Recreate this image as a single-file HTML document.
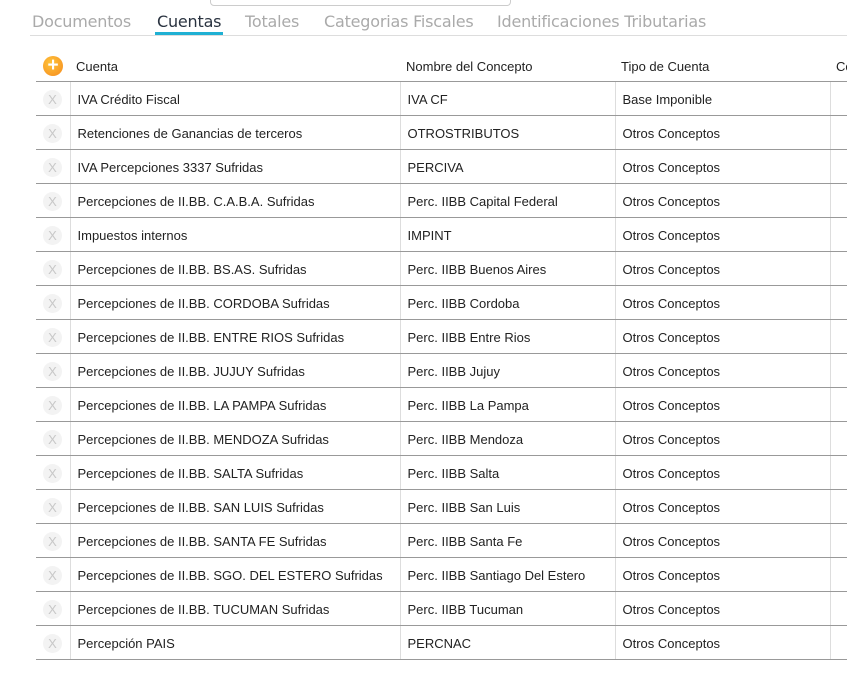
<!DOCTYPE html>
<html><head><meta charset="utf-8"><style>
body{margin:0;width:847px;height:677px;background:#fff;overflow:hidden;font-family:"Liberation Sans",sans-serif;position:relative}
.box{position:absolute;left:210px;top:-6px;width:299px;height:10px;border:1px solid #ccc;border-radius:4px}
.tabs{position:absolute;left:30px;top:0;width:817px;height:35px;border-bottom:1px solid #ddd;font-family:"DejaVu Sans","Liberation Sans",sans-serif;font-size:16px;color:#aaa}
.tabs span{position:absolute;top:12px;white-space:nowrap;letter-spacing:-0.2px}
.tabs .act{color:#2a3340}
.ul{position:absolute;left:155px;top:32px;width:68px;height:3px;background:#1fb0d3}
table{position:absolute;left:36px;top:48px;border-collapse:collapse;font-size:13px;color:#222;table-layout:fixed;width:830px}
th{font-weight:normal;text-align:left;height:30px;padding:3px 6px 0;border-bottom:1px solid #999;white-space:nowrap;overflow:hidden}
td{height:31px;border-bottom:1px solid #999;border-left:1px solid #ddd;padding:2px 7px 0 7px;white-space:nowrap;overflow:hidden}
td:first-child{border-left:none;padding:2px 0 0 0}
.x{width:19px;height:19px;border-radius:50%;background:#f3f3f3;color:#c8c8c8;font-size:13px;line-height:19px;text-align:center;margin-left:7px}
.plus{width:20px;height:20px;border-radius:50%;background:radial-gradient(circle at 40% 35%,#ffc43a,#f58a1e);color:#fff;font-size:19px;line-height:19px;text-align:center;font-weight:bold;margin-left:1px}
</style></head><body>
<div class="box"></div>
<div class="tabs">
<span style="left:2px">Documentos</span><span class="act" style="left:127px">Cuentas</span><span style="left:215px">Totales</span><span style="left:294px">Categorias Fiscales</span><span style="left:467px">Identificaciones Tributarias</span>
</div>
<div class="ul"></div>
<table>
<colgroup><col style="width:34px"><col style="width:330px"><col style="width:215px"><col style="width:215px"><col style="width:36px"></colgroup>
<tr><th style="padding:2px 0 0 6px"><div class="plus">+</div></th><th>Cuenta</th><th>Nombre del Concepto</th><th>Tipo de Cuenta</th><th>Co</th></tr>
<tr><td><div class="x">X</div></td><td>IVA Crédito Fiscal</td><td>IVA CF</td><td>Base Imponible</td><td></td></tr>
<tr><td><div class="x">X</div></td><td>Retenciones de Ganancias de terceros</td><td>OTROSTRIBUTOS</td><td>Otros Conceptos</td><td></td></tr>
<tr><td><div class="x">X</div></td><td>IVA Percepciones 3337 Sufridas</td><td>PERCIVA</td><td>Otros Conceptos</td><td></td></tr>
<tr><td><div class="x">X</div></td><td>Percepciones de II.BB. C.A.B.A. Sufridas</td><td>Perc. IIBB Capital Federal</td><td>Otros Conceptos</td><td></td></tr>
<tr><td><div class="x">X</div></td><td>Impuestos internos</td><td>IMPINT</td><td>Otros Conceptos</td><td></td></tr>
<tr><td><div class="x">X</div></td><td>Percepciones de II.BB. BS.AS. Sufridas</td><td>Perc. IIBB Buenos Aires</td><td>Otros Conceptos</td><td></td></tr>
<tr><td><div class="x">X</div></td><td>Percepciones de II.BB. CORDOBA Sufridas</td><td>Perc. IIBB Cordoba</td><td>Otros Conceptos</td><td></td></tr>
<tr><td><div class="x">X</div></td><td>Percepciones de II.BB. ENTRE RIOS Sufridas</td><td>Perc. IIBB Entre Rios</td><td>Otros Conceptos</td><td></td></tr>
<tr><td><div class="x">X</div></td><td>Percepciones de II.BB. JUJUY Sufridas</td><td>Perc. IIBB Jujuy</td><td>Otros Conceptos</td><td></td></tr>
<tr><td><div class="x">X</div></td><td>Percepciones de II.BB. LA PAMPA Sufridas</td><td>Perc. IIBB La Pampa</td><td>Otros Conceptos</td><td></td></tr>
<tr><td><div class="x">X</div></td><td>Percepciones de II.BB. MENDOZA Sufridas</td><td>Perc. IIBB Mendoza</td><td>Otros Conceptos</td><td></td></tr>
<tr><td><div class="x">X</div></td><td>Percepciones de II.BB. SALTA Sufridas</td><td>Perc. IIBB Salta</td><td>Otros Conceptos</td><td></td></tr>
<tr><td><div class="x">X</div></td><td>Percepciones de II.BB. SAN LUIS Sufridas</td><td>Perc. IIBB San Luis</td><td>Otros Conceptos</td><td></td></tr>
<tr><td><div class="x">X</div></td><td>Percepciones de II.BB. SANTA FE Sufridas</td><td>Perc. IIBB Santa Fe</td><td>Otros Conceptos</td><td></td></tr>
<tr><td><div class="x">X</div></td><td>Percepciones de II.BB. SGO. DEL ESTERO Sufridas</td><td>Perc. IIBB Santiago Del Estero</td><td>Otros Conceptos</td><td></td></tr>
<tr><td><div class="x">X</div></td><td>Percepciones de II.BB. TUCUMAN Sufridas</td><td>Perc. IIBB Tucuman</td><td>Otros Conceptos</td><td></td></tr>
<tr><td><div class="x">X</div></td><td>Percepción PAIS</td><td>PERCNAC</td><td>Otros Conceptos</td><td></td></tr>
</table>
</body></html>
